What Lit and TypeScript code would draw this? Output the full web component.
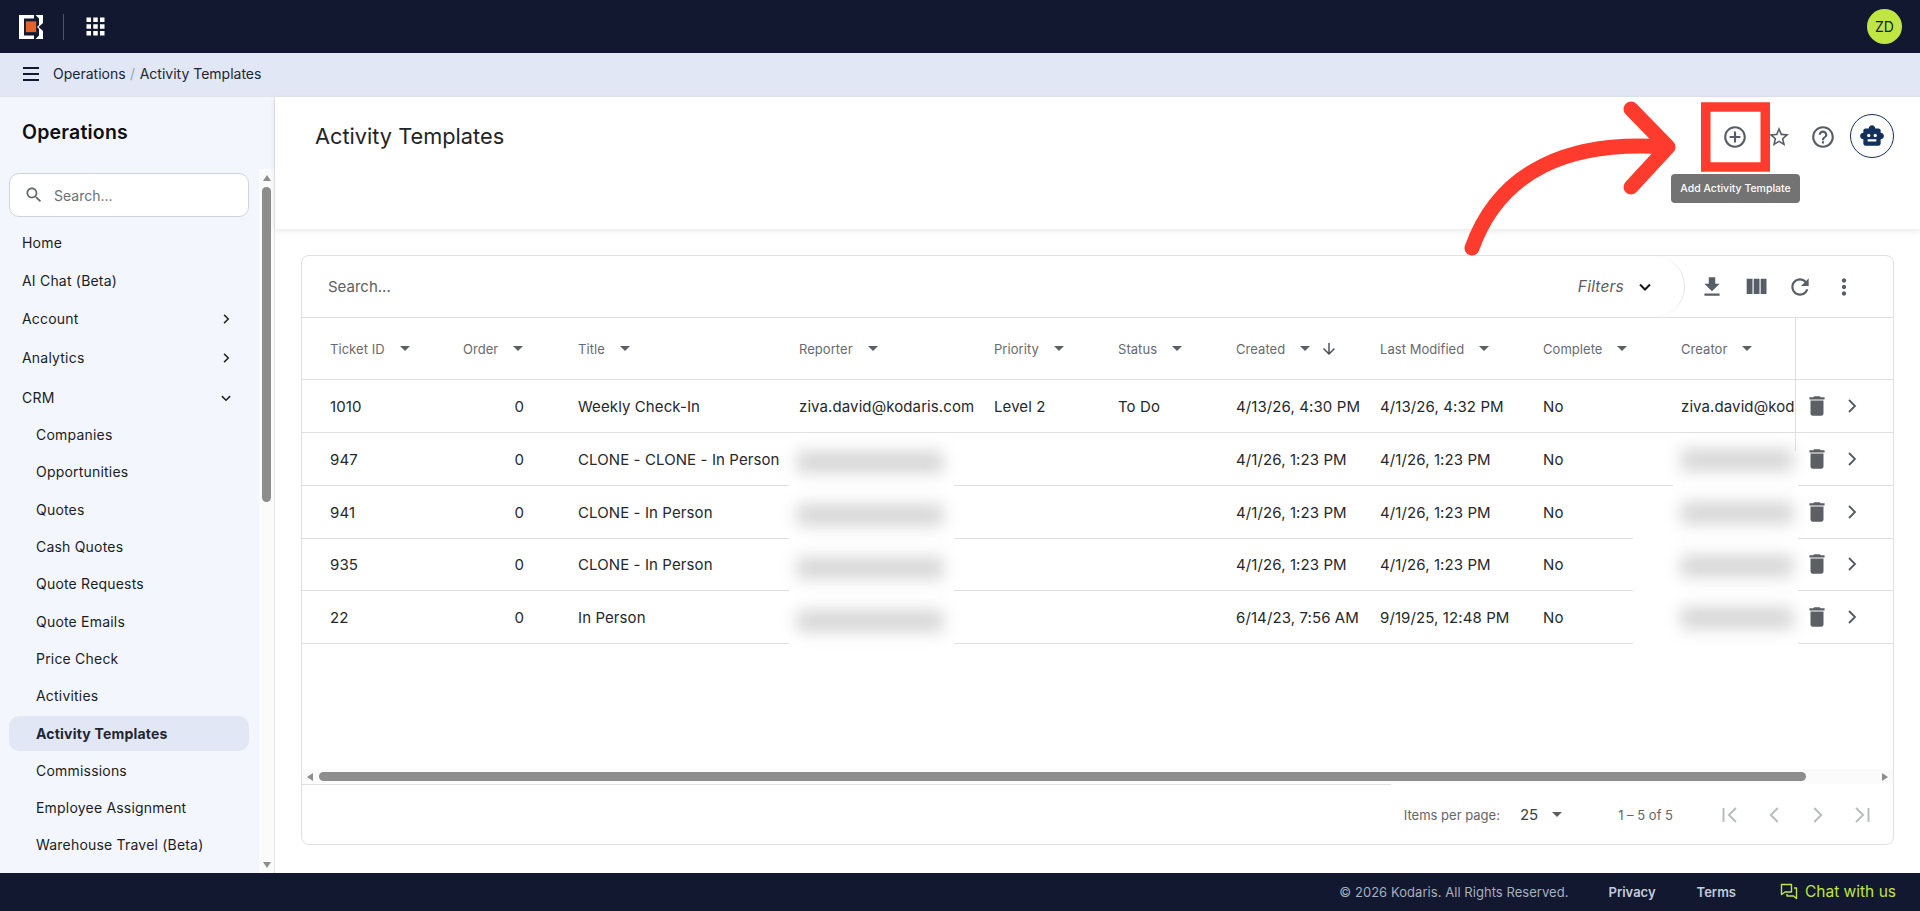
import { LitElement, html, css } from "lit";
import { customElement } from "lit/decorators.js";

const P = {
  apps: "M4 8h4V4H4v4zm6 12h4v-4h-4v4zm-6 0h4v-4H4v4zm0-6h4v-4H4v4zm6 0h4v-4h-4v4zm6-10v4h4V4h-4zm-6 4h4V4h-4v4zm6 6h4v-4h-4v4zm0 6h4v-4h-4v4z",
  plus: "M13 7h-2v4H7v2h4v4h2v-4h4v-2h-4V7zm-1-5C6.48 2 2 6.48 2 12s4.48 10 10 10 10-4.48 10-10S17.52 2 12 2zm0 18c-4.41 0-8-3.59-8-8s3.59-8 8-8 8 3.59 8 8-3.59 8-8 8z",
  star: "M22 9.24l-7.19-.62L12 2 9.19 8.63 2 9.24l5.46 4.73L5.82 21 12 17.27 18.18 21l-1.63-7.03L22 9.24zM12 15.4l-3.76 2.27 1-4.28-3.32-2.88 4.38-.38L12 6.1l1.71 4.04 4.38.38-3.32 2.88 1 4.28L12 15.4z",
  help: "M11 18h2v-2h-2v2zm1-16C6.48 2 2 6.48 2 12s4.48 10 10 10 10-4.48 10-10S17.52 2 12 2zm0 18c-4.41 0-8-3.59-8-8s3.59-8 8-8 8 3.59 8 8-3.59 8-8 8zm0-14c-2.21 0-4 1.79-4 4h2c0-1.1.9-2 2-2s2 .9 2 2c0 2-3 1.75-3 5h2c0-2.25 3-2.5 3-5 0-2.21-1.79-4-4-4z",
  bot: "M20 9V7c0-1.1-.9-2-2-2h-3c0-1.66-1.34-3-3-3S9 3.34 9 5H6c-1.1 0-2 .9-2 2v2c-1.66 0-3 1.34-3 3s1.34 3 3 3v4c0 1.1.9 2 2 2h12c1.1 0 2-.9 2-2v-4c1.66 0 3-1.34 3-3s-1.34-3-3-3zM7.5 11.5c0-.83.67-1.5 1.5-1.5s1.5.67 1.5 1.5S9.83 13 9 13s-1.5-.67-1.5-1.5zM16 17H8v-2h8v2zm-1-4c-.83 0-1.5-.67-1.5-1.5S14.17 10 15 10s1.5.67 1.5 1.5S15.83 13 15 13z",
  download: "M19 9h-4V3H9v6H5l7 7 7-7zM5 18v2h14v-2H5z",
  columns: "M10 18h5V5h-5v13zm-6 0h5V5H4v13zM16 5v13h5V5h-5z",
  refresh: "M17.65 6.35C16.2 4.9 14.21 4 12 4c-4.42 0-7.99 3.58-7.99 8s3.57 8 7.99 8c3.73 0 6.84-2.55 7.73-6h-2.08c-.82 2.33-3.04 4-5.65 4-3.31 0-6-2.69-6-6s2.69-6 6-6c1.66 0 3.14.69 4.22 1.78L13 11h7V4l-2.35 2.35z",
  more: "M12 8c1.1 0 2-.9 2-2s-.9-2-2-2-2 .9-2 2 .9 2 2 2zm0 2c-1.1 0-2 .9-2 2s.9 2 2 2 2-.9 2-2-.9-2-2-2zm0 6c-1.1 0-2 .9-2 2s.9 2 2 2 2-.9 2-2-.9-2-2-2z",
  trash: "M6 19c0 1.1.9 2 2 2h8c1.1 0 2-.9 2-2V7H6v12zM19 4h-3.5l-1-1h-5l-1 1H5v2h14V4z",
  down: "M20 12l-1.41-1.41L13 16.17V4h-2v12.17l-5.58-5.59L4 12l8 8 8-8z",
  search: "M15.5 14h-.79l-.28-.27C15.41 12.59 16 11.11 16 9.5 16 5.91 13.09 3 9.5 3S3 5.91 3 9.5 5.91 16 9.5 16c1.61 0 3.09-.59 4.23-1.57l.27.28v.79l5 4.99L20.49 19l-4.99-5zm-6 0C7.01 14 5 11.99 5 9.5S7.01 5 9.5 5 14 7.01 14 9.5 11.99 14 9.5 14z",
};

const icon = (d: string, size: number) =>
  html`<svg class="ic" width=${size} height=${size} viewBox="0 0 24 24" aria-hidden="true"><path d=${d}></path></svg>`;

const stroke = (d: string, size: number, cls = "") =>
  html`<svg class="st ${cls}" width=${size} height=${size} viewBox="0 0 24 24" aria-hidden="true"><path d=${d}></path></svg>`;

type NavItem = { label: string; kind: "plain" | "exp" | "sub"; chev?: "right" | "down"; active?: boolean };

const NAV: NavItem[] = [
  { label: "Home", kind: "plain" },
  { label: "AI Chat (Beta)", kind: "plain" },
  { label: "Account", kind: "exp", chev: "right" },
  { label: "Analytics", kind: "exp", chev: "right" },
  { label: "CRM", kind: "exp", chev: "down" },
  { label: "Companies", kind: "sub" },
  { label: "Opportunities", kind: "sub" },
  { label: "Quotes", kind: "sub" },
  { label: "Cash Quotes", kind: "sub" },
  { label: "Quote Requests", kind: "sub" },
  { label: "Quote Emails", kind: "sub" },
  { label: "Price Check", kind: "sub" },
  { label: "Activities", kind: "sub" },
  { label: "Activity Templates", kind: "sub", active: true },
  { label: "Commissions", kind: "sub" },
  { label: "Employee Assignment", kind: "sub" },
  { label: "Warehouse Travel (Beta)", kind: "sub" },
];

const HEADERS = ["Ticket ID", "Order", "Title", "Reporter", "Priority", "Status", "Created", "Last Modified", "Complete", "Creator"];

const ROWS = [
  ["1010", "0", "Weekly Check-In", "ziva.david@kodaris.com", "Level 2", "To Do", "4/13/26, 4:30 PM", "4/13/26, 4:32 PM", "No", "ziva.david@kodaris.com"],
  ["947", "0", "CLONE - CLONE - In Person", "", "", "", "4/1/26, 1:23 PM", "4/1/26, 1:23 PM", "No", ""],
  ["941", "0", "CLONE - In Person", "", "", "", "4/1/26, 1:23 PM", "4/1/26, 1:23 PM", "No", ""],
  ["935", "0", "CLONE - In Person", "", "", "", "4/1/26, 1:23 PM", "4/1/26, 1:23 PM", "No", ""],
  ["22", "0", "In Person", "", "", "", "6/14/23, 7:56 AM", "9/19/25, 12:48 PM", "No", ""],
];

@customElement("app-root")
export class AppRoot extends LitElement {
  static styles = css`
    :host {
      display: flex;
      flex-direction: column;
      position: relative;
      width: 1920px;
      height: 911px;
      overflow: hidden;
      background: #fff;
      font-family: Inter, "Noto Sans", sans-serif;
      color: #26282c;
    }
    * { box-sizing: border-box; }
    .ic { display: block; fill: currentColor; flex: none; }
    .st { display: block; fill: none; stroke: currentColor; stroke-width: 1.7; flex: none; }

    .topbar { height: 53px; flex: none; background: #111830; display: flex; align-items: center; padding: 0 18px 0 19px; }
    .logo { display: block; }
    .vr { width: 1px; height: 26px; background: #4c5368; margin: 0 18px 0 20px; }
    .apps { color: #fff; }
    .avatar { margin-left: auto; width: 35px; height: 35px; border-radius: 50%; background: #c0e643; color: #111830; font-size: 14px; display: flex; align-items: center; justify-content: center; font-weight: 400; }

    .crumbs { height: 44px; flex: none; background: #e1e7f4; border-bottom: 1px solid #dfe3ea; display: flex; align-items: center; padding: 0 0 2px 23px; font-size: 14px; color: #1c2436; }
    .burger { width: 16px; height: 14px; margin-right: 14px; display: flex; flex-direction: column; justify-content: space-between; }
    .burger i { display: block; height: 2px; background: #111830; }
    .sep { color: #9aa3b5; margin: 0 4.5px; }

    .main { flex: 1; min-height: 0; display: flex; }
    .side { width: 275px; flex: none; background: #f3f6fc; border-right: 1px solid #e3e5ea; display: flex; flex-direction: column; }
    .side h2 { margin: 0; height: 72px; flex: none; padding: 23px 0 0 22px; font-size: 19.5px; line-height: 24px; font-weight: 600; color: #0d0f14; letter-spacing: .2px; }
    .side-body { flex: 1; min-height: 0; display: flex; }
    .nav { flex: 1; min-width: 0; padding: 4px 10px 0 9px; overflow: hidden; }
    .search { height: 44px; background: #fff; border: 1px solid #cfd3dc; border-radius: 10px; display: flex; align-items: center; padding-left: 14px; font-size: 14px; color: #6b6f76; margin-bottom: 7px; }
    .search .ic { color: #62666c; margin-right: 10px; }
    .item { display: flex; align-items: center; font-size: 14px; letter-spacing: .2px; color: #1a1d24; padding-left: 13px; padding-right: 14px; justify-content: space-between; }
    .item.plain { height: 37.5px; }
    .item.exp { height: 39px; }
    .item.open { padding-top: 2px; }
    .item.sub { height: 37.3px; padding-left: 27px; }
    .item.active { font-weight: 700; background: #e1e7f4; border-radius: 10px; height: 35px; margin: 1.15px 0; color: #1f2533; }
    .item .st { stroke-width: 2; color: #222; }

    .sbar { width: 15px; flex: none; background: #fbfbfb; display: flex; flex-direction: column; align-items: center; padding: 3px 0 0; color: #8d8d8d; }
    .thumb { width: 9px; height: 315px; border-radius: 5px; background: #8d8d8d; margin-top: 6px; }
    .tri-up { width: 0; height: 0; border: 4.5px solid transparent; border-top: 0; border-bottom: 6px solid #8d8d8d; margin-top: 3px; }
    .tri-down { width: 0; height: 0; border: 4.5px solid transparent; border-bottom: 0; border-top: 6px solid #8d8d8d; margin-top: auto; margin-bottom: 5px; }

    .content { flex: 1; min-width: 0; display: flex; flex-direction: column; }
    .head { height: 132px; flex: none; display: flex; align-items: flex-start; padding: 18px 26px 0 40px; box-shadow: 0 2px 6px rgba(0, 0, 0, .09); position: relative; }
    .head h1 { margin: 0; font-size: 21.75px; line-height: 42px; font-weight: 400; color: #222427; flex: 1; }
    .act { width: 44px; height: 44px; display: flex; align-items: center; justify-content: center; color: #585e67; }
    .botbtn { width: 44px; height: 44px; margin-left: 5px; margin-top: -1px; border-radius: 50%; border: 1px solid #16305a; color: #12305b; display: flex; align-items: center; justify-content: center; }
    .tip { position: absolute; left: 1396px; top: 77px; width: 129px; height: 29px; border-radius: 4px; background: #737373; color: #fff; font-size: 10.5px; font-weight: 500; display: flex; align-items: center; justify-content: center; }

    .wrap { flex: 1; min-height: 0; padding: 26px 26px 28px 26px; display: flex; }
    .card { flex: 1; border: 1px solid #e0e0e0; border-radius: 8px; display: flex; flex-direction: column; position: relative; overflow: hidden; }
    .tools { height: 62px; flex: none; border-bottom: 1px solid #e0e0e0; display: flex; align-items: center; }
    .pill { width: 1383px; height: 61px; margin-right: 5px; border-right: 1px solid #e6e6e6; border-radius: 0 50px 50px 0; display: flex; align-items: center; padding: 0 29px 0 26px; font-size: 15px; color: #5d6066; }
    .pill .grow { flex: 1; }
    .filters { font-style: italic; font-size: 15.5px; color: #5a5d63; margin-right: 11px; letter-spacing: .2px; }
    .pill .st { color: #16181d; stroke-width: 2.4; }
    .tool { width: 44px; height: 44px; display: flex; align-items: center; justify-content: center; color: #585e67; }

    .grid { height: 451px; flex: none; overflow: hidden; }
    .row { display: grid; grid-template-columns: 152px 114px 221px 195px 124px 118px 144px 162px 139px 124px 98px; border-bottom: 1px solid #e0e0e0; height: 52.85px; font-size: 15px; letter-spacing: .1px; color: #26282c; }
    .row.hd { height: 62px; font-size: 13px; letter-spacing: .05px; color: #666a70; }
    .cell { display: flex; align-items: center; padding: 1px 0 0 10px; white-space: nowrap; overflow: hidden; }
    .row.hd .cell { padding-top: 0; }
    .cell:first-child { padding-left: 28px; }
    .cell.num { justify-content: flex-end; padding-right: 44px; padding-left: 0; }
    .row.hd .cell.num { justify-content: flex-start; padding: 0 0 0 9px; }
    .cell.gap { padding-left: 11px; }
    .cell.last { border-left: 1px solid #e0e0e0; padding: 0 0 0 8px; color: #5c5f64; gap: 10px; }
    .tri { width: 0; height: 0; border-left: 5px solid transparent; border-right: 5px solid transparent; border-top: 5.5px solid #5c6066; margin-left: 15px; flex: none; }
    .sort { color: #4c5056; margin-left: 10px; }
    .cell .chev { color: #555a62; stroke-width: 1.8; }

    .patch { position: absolute; background: #fff; display: flex; flex-direction: column; }
    .patch i { position: absolute; height: 22px; background: #cfcfcf; filter: blur(8px); opacity: .85; }
    .patch-rep { left: 487px; top: 187px; width: 165px; height: 202px; }
    .patch-cre { left: 1331px; top: 230px; width: 165px; height: 159px; }
    .patch-cre2 { left: 1371px; top: 195px; width: 125px; height: 36px; }

    .hbar { height: 15px; flex: none; background: #fbfbfb; display: flex; align-items: center; padding: 0 5px; position: relative; }
    .hthumb { width: 1487px; height: 9px; border-radius: 5px; background: #8d8d8d; margin-left: 6px; }
    .tri-l { width: 0; height: 0; border: 4.5px solid transparent; border-left: 0; border-right: 6px solid #8d8d8d; }
    .tri-r { width: 0; height: 0; border: 4.5px solid transparent; border-right: 0; border-left: 6px solid #8d8d8d; margin-left: auto; margin-right: 0; }
    .rule { height: 1px; flex: none; width: 1089px; background: #e0e0e0; }

    .pager { flex: 1; min-height: 0; display: flex; align-items: center; justify-content: flex-end; padding-right: 9px; font-size: 13px; color: #62666c; }
    .pp { margin-right: 20px; }
    .ps { font-size: 15px; color: #3d4045; }
    .pt { margin-left: 14px; margin-right: 56px; width: 0; height: 0; border-left: 5px solid transparent; border-right: 5px solid transparent; border-top: 5.5px solid #5c6066; }
    .rng { margin-right: 35px; }
    .pg { width: 44px; display: flex; justify-content: center; color: #b9bbbe; }
    .pg .st { stroke-width: 1.8; }

    .foot { height: 38px; flex: none; background: #111830; display: flex; align-items: center; justify-content: flex-end; padding-right: 24px; font-size: 13px; color: #a9afbf; }
    .foot .copy { letter-spacing: .05px; }
    .foot .lk { font-weight: 600; color: #c3cbdd; }
    .priv { margin: 0 41px 0 40px; }
    .terms { margin-right: 44px; }
    .chat { color: #bfe641; font-size: 15.5px; display: flex; align-items: center; gap: 7px; margin-top: -1px; }
    .chat svg { fill: none; stroke: currentColor; stroke-width: 1.4; }

    .mark { position: absolute; inset: 0; pointer-events: none; fill: none; stroke: #ff3b2e; }
  `;

  private renderHeader() {
    return html`<div class="row hd">
      ${HEADERS.map(
        (h, i) => html`<div class="cell ${i === 1 ? "num" : ""} ${i === 8 ? "gap" : ""}">
          <span>${h}</span><span class="tri"></span>
          ${h === "Created" ? html`<span class="sort">${icon(P.down, 18)}</span>` : ""}
        </div>`
      )}
      <div class="cell last"></div>
    </div>`;
  }

  private renderRow(r: string[]) {
    return html`<div class="row">
      ${r.map((v, i) => html`<div class="cell ${i === 1 ? "num" : ""} ${i === 8 ? "gap" : ""}">${v}</div>`)}
      <div class="cell last">${icon(P.trash, 26)}${stroke("M9 6l6 6-6 6", 24, "chev")}</div>
    </div>`;
  }

  render() {
    return html`
      <header class="topbar">
        <svg class="logo" width="24" height="24" viewBox="0 0 24 24" aria-hidden="true">
          <path fill="#fff" d="M0 0h15v3.5H5v17h10V24H0z" />
          <path fill="#fff" d="M16.500 0H24V8L19.500 12 24 16V24H16.500L20 20.500V14L18 12 20 10V3.500Z" />
          <rect x="6.500" y="6" width="11" height="11.500" fill="#e2642a" stroke="#1c2436" stroke-width=".8" />
        </svg>
        <div class="vr"></div>
        <span class="apps">${icon(P.apps, 27)}</span>
        <div class="avatar">ZD</div>
      </header>
      <nav class="crumbs">
        <div class="burger"><i></i><i></i><i></i></div>
        <span>Operations</span><span class="sep">/</span><span>Activity Templates</span>
      </nav>
      <div class="main">
        <aside class="side">
          <h2>Operations</h2>
          <div class="side-body">
            <div class="nav">
              <div class="search">${icon(P.search, 20)}<span>Search...</span></div>
              ${NAV.map(
                (n) => html`<div class="item ${n.kind} ${n.active ? "active" : ""} ${n.chev === "down" ? "open" : ""}">
                  <span>${n.label}</span>
                  ${n.chev === "right" ? stroke("M9.500 6.500l5.500 5.500-5.500 5.500", 18) : ""}
                  ${n.chev === "down" ? stroke("M6.500 9.500l5.500 5.500 5.500-5.500", 18) : ""}
                </div>`
              )}
            </div>
            <div class="sbar"><div class="tri-up"></div><div class="thumb"></div><div class="tri-down"></div></div>
          </div>
        </aside>
        <section class="content">
          <div class="head">
            <h1>Activity Templates</h1>
            <div class="act">${icon(P.plus, 26)}</div>
            <div class="act">${icon(P.star, 24)}</div>
            <div class="act">${icon(P.help, 26)}</div>
            <div class="botbtn">${icon(P.bot, 26)}</div>
            <div class="tip">Add Activity Template</div>
          </div>
          <div class="wrap">
            <div class="card">
              <div class="tools">
                <div class="pill">
                  <span class="grow">Search...</span>
                  <span class="filters">Filters</span>
                  ${stroke("M6 9l6 6 6-6", 20)}
                </div>
                <div class="tool">${icon(P.download, 26)}</div>
                <div class="tool">${icon(P.columns, 28)}</div>
                <div class="tool">${icon(P.refresh, 26)}</div>
                <div class="tool">${icon(P.more, 26)}</div>
              </div>
              <div class="grid">
                ${this.renderHeader()}
                ${ROWS.map((r) => this.renderRow(r))}
              </div>
              <div class="patch patch-rep" aria-hidden="true">
                <i style="left:8px;top:8px;width:146px"></i>
                <i style="left:8px;top:61px;width:146px"></i>
                <i style="left:8px;top:114px;width:146px"></i>
                <i style="left:8px;top:167px;width:146px"></i>
              </div>
              <div class="patch patch-cre2" aria-hidden="true"></div>
              <div class="patch patch-cre" aria-hidden="true">
                <i style="left:48px;top:-37px;width:112px"></i>
                <i style="left:48px;top:16px;width:112px"></i>
                <i style="left:48px;top:69px;width:112px"></i>
                <i style="left:48px;top:121px;width:112px"></i>
              </div>
              <div class="hbar"><div class="tri-l"></div><div class="hthumb"></div><div class="tri-r"></div></div>
              <div class="rule"></div>
              <div class="pager">
                <span class="pp">Items per page:</span>
                <span class="ps">25</span><span class="pt"></span>
                <span class="rng">1 – 5 of 5</span>
                <span class="pg">${stroke("M6 5.500v13M17.500 5.500L11 12l6.500 6.500", 26)}</span>
                <span class="pg">${stroke("M15.500 5.500L9 12l6.500 6.500", 26)}</span>
                <span class="pg">${stroke("M8.500 5.500L15 12l-6.500 6.500", 26)}</span>
                <span class="pg">${stroke("M18 5.500v13M6.500 5.500L13 12l-6.500 6.500", 26)}</span>
              </div>
            </div>
          </div>
        </section>
      </div>
      <footer class="foot">
        <span class="copy">© 2026 Kodaris. All Rights Reserved.</span>
        <span class="lk priv">Privacy</span>
        <span class="lk terms">Terms</span>
        <span class="chat">
          <svg width="18" height="18" viewBox="0 0 18 18" aria-hidden="true"><path d="M1.500 1.500h10v7.500H5l-3.500 2.500zM14 5h2.500v10.500L13.500 13H7v-2" stroke-linejoin="round"></path></svg>
          Chat with us
        </span>
      </footer>
      <svg class="mark" width="1920" height="911" viewBox="0 0 1920 911" aria-hidden="true">
        <rect x="1705.750" y="107" width="59.500" height="60" stroke-width="9.500" />
        <path d="M1472 248C1500 170 1570 140 1665 147" stroke-width="15" stroke-linecap="round" />
        <path d="M1631 109L1668 147L1631 187" stroke-width="15" stroke-linecap="round" stroke-linejoin="round" />
      </svg>
    `;
  }
}
